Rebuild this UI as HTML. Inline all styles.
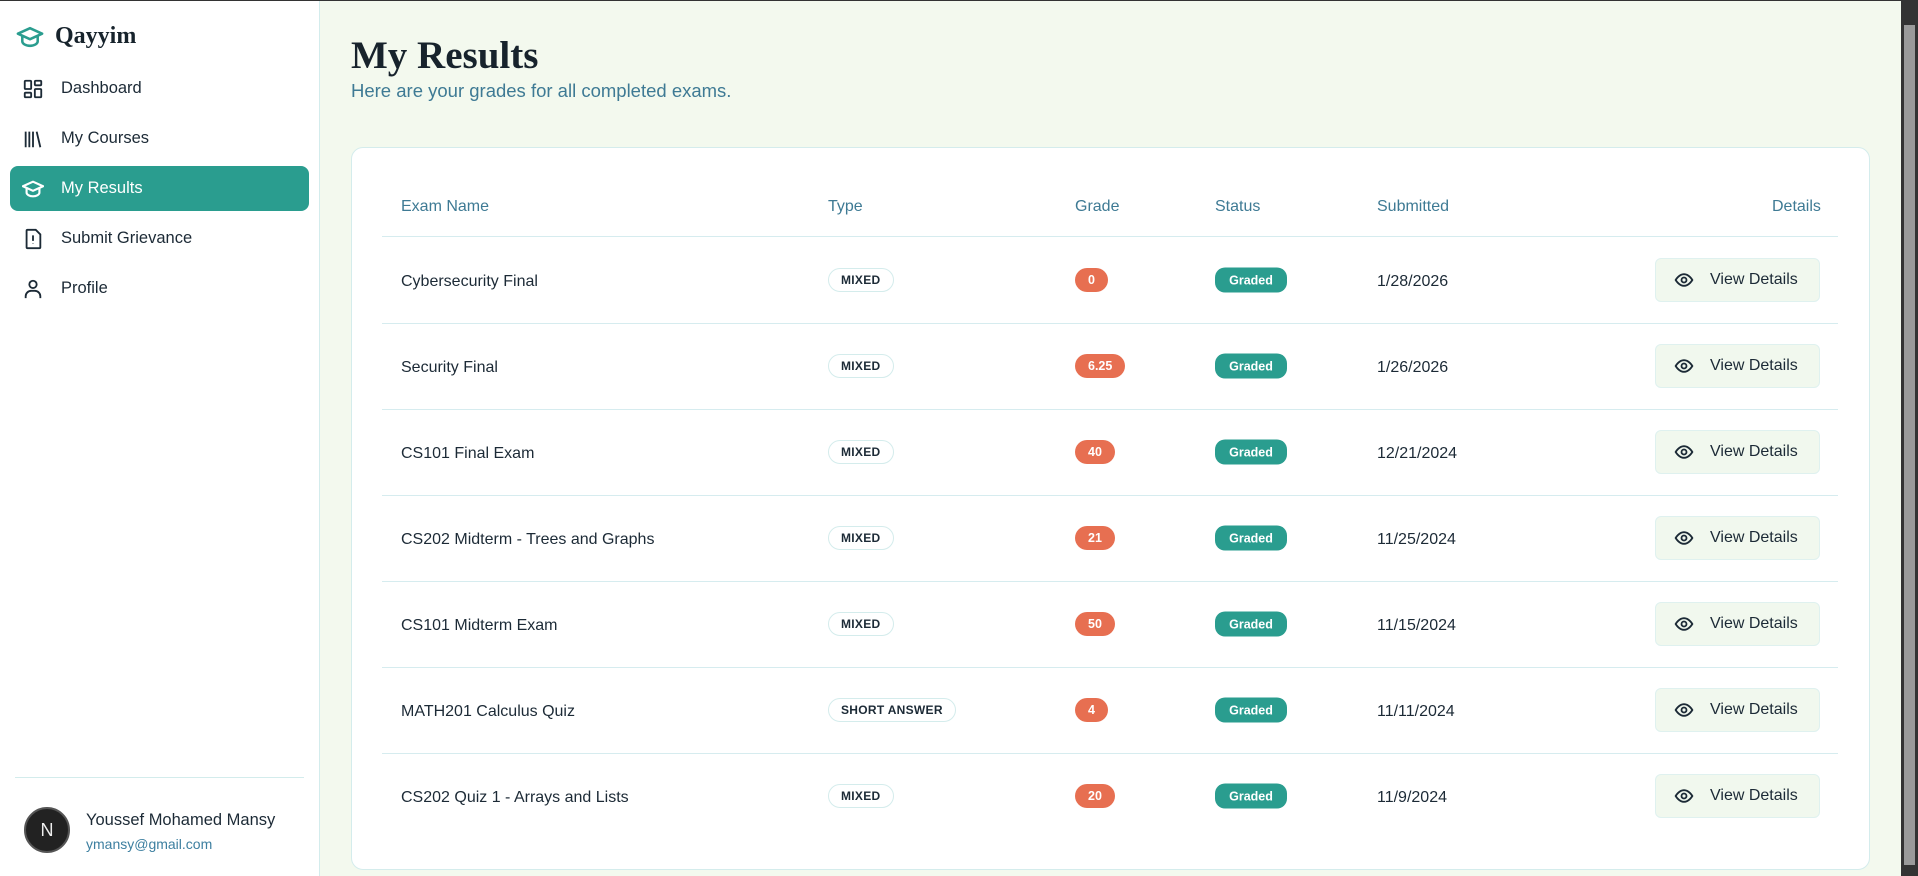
<!DOCTYPE html>
<html><head><meta charset="utf-8"><style>
*{box-sizing:border-box;margin:0;padding:0}
body{width:1918px;height:876px;overflow:hidden;font-family:"Liberation Sans",sans-serif;background:#f3f9ee;color:#1c2a36;position:relative}
.top{position:absolute;left:0;top:0;width:1918px;height:1px;background:#333}
.sb{position:absolute;left:0;top:1px;width:320px;height:875px;background:#fff;border-right:1px solid #d3ecec}
.logo{position:absolute;left:16px;top:22px;display:flex;align-items:center}
.logo span{font-family:"Liberation Serif",serif;font-weight:bold;font-size:24px;margin-left:11px;color:#17232c}
.nav{position:absolute;left:10px;width:299px;height:45px;border-radius:8px;display:flex;align-items:center;padding-left:12px;font-size:16.5px;color:#1c2a36}
.nav svg{width:22px;height:22px;margin-right:17px}
.nav.act{background:#2a9d8f;color:#fff}
.sep{position:absolute;left:15px;top:776px;width:289px;height:1px;background:#d3ecec}
.av{position:absolute;left:24px;top:806px;width:46px;height:46px;border-radius:50%;background:#222;border:2px solid #555;color:#eee;font-size:18px;display:flex;align-items:center;justify-content:center}
.nm{position:absolute;left:86px;top:810px;font-size:16.5px}
.em{position:absolute;left:86px;top:835px;font-size:14px;color:#3d7fa0}
h1{position:absolute;left:351px;top:33px;font-family:"Liberation Serif",serif;font-size:39px;font-weight:bold;color:#17232c}
.sub{position:absolute;left:351px;top:80px;font-size:18.5px;color:#3e7a94}
.card{position:absolute;left:351px;top:147px;width:1519px;height:723px;background:#fff;border:1px solid #d4ecec;border-radius:12px}
.scroll{position:absolute;left:1901px;top:1px;width:17px;height:875px;background:#333}
.scroll div{position:absolute;left:3px;top:24px;width:11px;height:840px;background:#9a9a9a}
.th{position:absolute;top:198px;font-size:16px;color:#3e7a94}
.hl{position:absolute;left:382px;width:1456px;height:1px;background:#d6ecef}
.row{position:absolute;left:0;width:1918px;height:86px}
.c{position:absolute;top:50%;transform:translateY(-50%);font-size:16px}
.t{margin-top:2px}
.mx{height:24px;padding:0 12px;border:1px solid #d4ecec;border-radius:12px;font-size:12px;font-weight:bold;display:flex;align-items:center;letter-spacing:.3px}
.gr{height:24px;padding:0 13px;border-radius:12px;background:#e76f51;color:#fff;font-size:12.5px;font-weight:bold;display:flex;align-items:center}
.st{height:25px;width:72px;border-radius:10px;background:#2a9d8f;color:#fff;font-size:12.5px;font-weight:bold;display:flex;align-items:center;justify-content:center}
.vd{left:1655px;width:165px;height:44px;border-radius:6px;background:#f1f8ee;border:1px solid #dff1ef;display:flex;align-items:center;padding-left:18px;font-size:16px}
.vd svg{margin-right:16px}
</style></head><body>
<div class="top"></div>
<div class="sb">
 <div class="logo"><svg width="28" height="22" viewBox="0 0 24 20" fill="none" stroke="#2a9d8f" stroke-width="2.3" stroke-linejoin="round"><path d="M1 7 12 2l11 5-11 5z"/><path d="M5 9v5c0 2 3 4 7 4s7-2 7-4V9"/></svg><span>Qayyim</span></div>
 <div class="nav" style="top:65px"><svg viewBox="0 0 24 24" fill="none" stroke="#1c2a36" stroke-width="2"><rect x="3" y="3" width="7" height="9" rx="1"/><rect x="14" y="3" width="7" height="5" rx="1"/><rect x="14" y="12" width="7" height="9" rx="1"/><rect x="3" y="16" width="7" height="5" rx="1"/></svg>Dashboard</div>
 <div class="nav" style="top:115px"><svg viewBox="0 0 24 24" fill="none" stroke="#1c2a36" stroke-width="2"><path d="M4 4v17M8 4v17M12 4v17M16 4l4 17"/></svg>My Courses</div>
 <div class="nav act" style="top:165px"><svg viewBox="0 0 24 20" fill="none" stroke="#fff" stroke-width="2.3" stroke-linejoin="round"><path d="M1 7 12 2l11 5-11 5z"/><path d="M5 9v5c0 2 3 4 7 4s7-2 7-4V9"/></svg>My Results</div>
 <div class="nav" style="top:215px"><svg viewBox="0 0 24 24" fill="none" stroke="#1c2a36" stroke-width="2"><path d="M6 2h9l5 5v14a1 1 0 0 1-1 1H6a1 1 0 0 1-1-1V3a1 1 0 0 1 1-1z"/><path d="M12 8v6M12 17v.5"/></svg>Submit Grievance</div>
 <div class="nav" style="top:265px"><svg viewBox="0 0 24 24" fill="none" stroke="#1c2a36" stroke-width="2"><circle cx="12" cy="7" r="4"/><path d="M4 22v-2a6 6 0 0 1 6-6h4a6 6 0 0 1 6 6v2"/></svg>Profile</div>
 <div class="sep"></div>
 <div class="av">N</div>
 <div class="nm">Youssef Mohamed Mansy</div>
 <div class="em">ymansy@gmail.com</div>
</div>
<h1>My Results</h1>
<div class="sub">Here are your grades for all completed exams.</div>
<div class="card"></div>
<div class="th" style="left:401px">Exam Name</div>
<div class="th" style="left:828px">Type</div>
<div class="th" style="left:1075px">Grade</div>
<div class="th" style="left:1215px">Status</div>
<div class="th" style="left:1377px">Submitted</div>
<div class="th" style="left:1772px">Details</div>
<div class="hl" style="top:236px"></div>

<div class="row" style="top:237px"><div class="c t" style="left:401px">Cybersecurity Final</div><div class="c mx" style="left:828px">MIXED</div><div class="c gr" style="left:1075px">0</div><div class="c st" style="left:1215px">Graded</div><div class="c t" style="left:1377px">1/28/2026</div><div class="c vd"><svg width="20" height="20" viewBox="0 0 24 24" fill="none" stroke="#1c2a36" stroke-width="2.2"><path d="M2 12s4-7 10-7 10 7 10 7-4 7-10 7S2 12 2 12z"/><circle cx="12" cy="12" r="3"/></svg>View Details</div></div>
<div class="hl" style="top:323px"></div>
<div class="row" style="top:323px"><div class="c t" style="left:401px">Security Final</div><div class="c mx" style="left:828px">MIXED</div><div class="c gr" style="left:1075px">6.25</div><div class="c st" style="left:1215px">Graded</div><div class="c t" style="left:1377px">1/26/2026</div><div class="c vd"><svg width="20" height="20" viewBox="0 0 24 24" fill="none" stroke="#1c2a36" stroke-width="2.2"><path d="M2 12s4-7 10-7 10 7 10 7-4 7-10 7S2 12 2 12z"/><circle cx="12" cy="12" r="3"/></svg>View Details</div></div>
<div class="hl" style="top:409px"></div>
<div class="row" style="top:409px"><div class="c t" style="left:401px">CS101 Final Exam</div><div class="c mx" style="left:828px">MIXED</div><div class="c gr" style="left:1075px">40</div><div class="c st" style="left:1215px">Graded</div><div class="c t" style="left:1377px">12/21/2024</div><div class="c vd"><svg width="20" height="20" viewBox="0 0 24 24" fill="none" stroke="#1c2a36" stroke-width="2.2"><path d="M2 12s4-7 10-7 10 7 10 7-4 7-10 7S2 12 2 12z"/><circle cx="12" cy="12" r="3"/></svg>View Details</div></div>
<div class="hl" style="top:495px"></div>
<div class="row" style="top:495px"><div class="c t" style="left:401px">CS202 Midterm - Trees and Graphs</div><div class="c mx" style="left:828px">MIXED</div><div class="c gr" style="left:1075px">21</div><div class="c st" style="left:1215px">Graded</div><div class="c t" style="left:1377px">11/25/2024</div><div class="c vd"><svg width="20" height="20" viewBox="0 0 24 24" fill="none" stroke="#1c2a36" stroke-width="2.2"><path d="M2 12s4-7 10-7 10 7 10 7-4 7-10 7S2 12 2 12z"/><circle cx="12" cy="12" r="3"/></svg>View Details</div></div>
<div class="hl" style="top:581px"></div>
<div class="row" style="top:581px"><div class="c t" style="left:401px">CS101 Midterm Exam</div><div class="c mx" style="left:828px">MIXED</div><div class="c gr" style="left:1075px">50</div><div class="c st" style="left:1215px">Graded</div><div class="c t" style="left:1377px">11/15/2024</div><div class="c vd"><svg width="20" height="20" viewBox="0 0 24 24" fill="none" stroke="#1c2a36" stroke-width="2.2"><path d="M2 12s4-7 10-7 10 7 10 7-4 7-10 7S2 12 2 12z"/><circle cx="12" cy="12" r="3"/></svg>View Details</div></div>
<div class="hl" style="top:667px"></div>
<div class="row" style="top:667px"><div class="c t" style="left:401px">MATH201 Calculus Quiz</div><div class="c mx" style="left:828px">SHORT ANSWER</div><div class="c gr" style="left:1075px">4</div><div class="c st" style="left:1215px">Graded</div><div class="c t" style="left:1377px">11/11/2024</div><div class="c vd"><svg width="20" height="20" viewBox="0 0 24 24" fill="none" stroke="#1c2a36" stroke-width="2.2"><path d="M2 12s4-7 10-7 10 7 10 7-4 7-10 7S2 12 2 12z"/><circle cx="12" cy="12" r="3"/></svg>View Details</div></div>
<div class="hl" style="top:753px"></div>
<div class="row" style="top:753px"><div class="c t" style="left:401px">CS202 Quiz 1 - Arrays and Lists</div><div class="c mx" style="left:828px">MIXED</div><div class="c gr" style="left:1075px">20</div><div class="c st" style="left:1215px">Graded</div><div class="c t" style="left:1377px">11/9/2024</div><div class="c vd"><svg width="20" height="20" viewBox="0 0 24 24" fill="none" stroke="#1c2a36" stroke-width="2.2"><path d="M2 12s4-7 10-7 10 7 10 7-4 7-10 7S2 12 2 12z"/><circle cx="12" cy="12" r="3"/></svg>View Details</div></div>
<div class="scroll"><div></div></div>
</body></html>
